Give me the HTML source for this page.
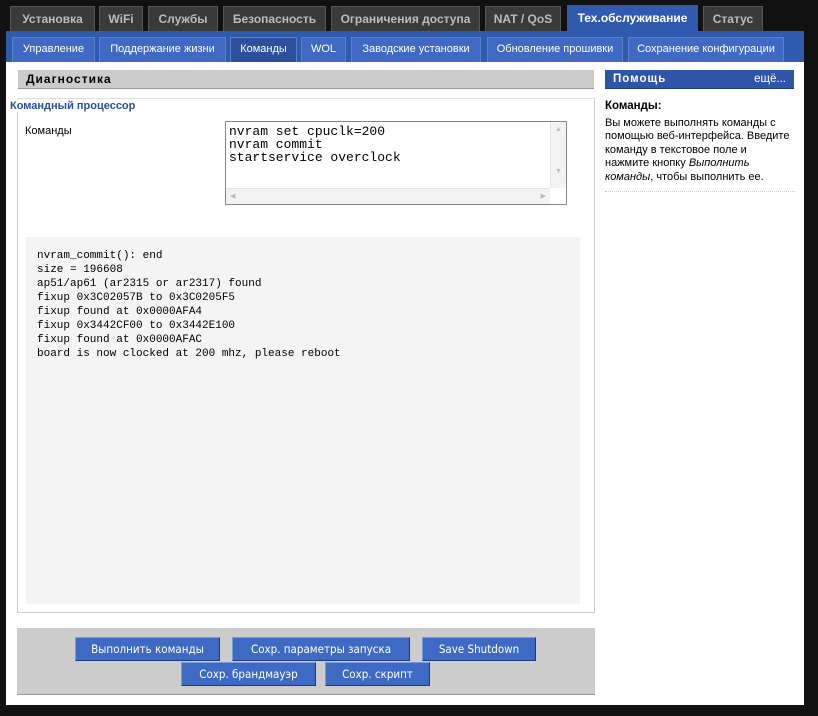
<!DOCTYPE html>
<html><head><meta charset="utf-8"><style>
*{margin:0;padding:0;box-sizing:border-box}
body{width:818px;height:716px;background:#111;position:relative;overflow:hidden;font-family:"Liberation Sans","DejaVu Sans",sans-serif;font-size:11px;color:#000}
.a{position:absolute}
.t{position:absolute;top:6px;height:25px;background:#3a3a3a;border:1px solid #555;border-bottom:none;color:#bbb;font-weight:bold;font-size:12px;text-align:center;line-height:24px}
.t.on{background:#2f5aae;color:#fff;top:5px;height:26px;border-color:#2f5aae}
.s{position:absolute;top:37px;height:25px;background:#3f69c2;border:1px solid #5a80cc;border-bottom:none;color:#fff;font-size:11px;text-align:center;line-height:23px}
.s.on{background:#2c509e}
.b{position:absolute;height:24px;background:#3e6ac4;color:#fff;font-family:"DejaVu Sans Condensed","Liberation Sans Narrow",sans-serif;font-size:11.5px;text-align:center;line-height:22px;border:1px solid;border-color:#7a9ae0 #1f3a78 #1f3a78 #7a9ae0}
pre{font-family:"Liberation Mono","Courier New",monospace}
</style></head><body>
<div class="t" style="left:10px;width:85px">Установка</div>
<div class="t" style="left:99px;width:44px">WiFi</div>
<div class="t" style="left:148px;width:70px">Службы</div>
<div class="t" style="left:223px;width:103px">Безопасность</div>
<div class="t" style="left:331px;width:149px">Ограничения доступа</div>
<div class="t" style="left:485px;width:76px">NAT / QoS</div>
<div class="t on" style="left:567px;width:131px">Тех.обслуживание</div>
<div class="t" style="left:703px;width:60px">Статус</div>
<div class="a" style="left:6px;top:31px;width:798px;height:31px;background:#2f5aae"></div>
<div class="s" style="left:12px;width:83px">Управление</div>
<div class="s" style="left:99px;width:127px">Поддержание жизни</div>
<div class="s on" style="left:230px;width:67px">Команды</div>
<div class="s" style="left:301px;width:45px">WOL</div>
<div class="s" style="left:351px;width:130px">Заводские установки</div>
<div class="s" style="left:487px;width:136px">Обновление прошивки</div>
<div class="s" style="left:628px;width:156px">Сохранение конфигурации</div>
<div class="a" style="left:6px;top:62px;width:798px;height:643px;background:#fff"></div>
<div class="a" style="left:18px;top:70px;width:576px;height:19px;background:#ccc;border-bottom:1px solid #999;font-weight:bold;font-size:12px;letter-spacing:1px;padding-left:8px;line-height:19px">Диагностика</div>
<div class="a" style="left:17px;top:98px;width:578px;height:515px;border:1px solid #ccc;border-top:1px solid #ddd"></div>
<div class="a" style="left:10px;top:100px;color:#2a4f96;font-weight:bold;font-size:11px;background:#fff;padding-right:2px">Командный процессор</div>
<div class="a" style="left:25px;top:125px">Команды</div>
<div class="a" style="left:225px;top:121px;width:342px;height:84px;border:1px solid #888;background:#fff">
<pre style="position:absolute;left:3px;top:3px;font-size:13px;line-height:13px">nvram set cpuclk=200
nvram commit
startservice overclock</pre>
<div class="a" style="right:0;top:0;width:16px;height:66px;background:#f3f3f3;border-left:1px solid #e4e4e4;color:#bbb;font-size:7px;text-align:center;padding-top:4px">▲<br><br><br><br><br><br>▼</div>
<div class="a" style="left:0;bottom:0;width:324px;height:16px;background:#f3f3f3;border-top:1px solid #e4e4e4;color:#bbb;font-size:7px;line-height:16px;padding:0 4px">◀<span style="float:right">▶</span></div>
</div>
<div class="a" style="left:26px;top:237px;width:554px;height:367px;background:#f4f4f4">
<pre style="position:absolute;left:11px;top:12px;font-size:11px;line-height:14px">nvram_commit(): end
size = 196608
ap51/ap61 (ar2315 or ar2317) found
fixup 0x3C02057B to 0x3C0205F5
fixup found at 0x0000AFA4
fixup 0x3442CF00 to 0x3442E100
fixup found at 0x0000AFAC
board is now clocked at 200 mhz, please reboot</pre></div>
<div class="a" style="left:17px;top:628px;width:578px;height:67px;background:#ccc;border-bottom:1px solid #999"></div>
<div class="b" style="left:75px;top:637px;width:145px">Выполнить команды</div>
<div class="b" style="left:232px;top:637px;width:178px">Сохр. параметры запуска</div>
<div class="b" style="left:422px;top:637px;width:114px">Save Shutdown</div>
<div class="b" style="left:181px;top:662px;width:135px">Сохр. брандмауэр</div>
<div class="b" style="left:325px;top:662px;width:105px">Сохр. скрипт</div>
<div class="a" style="left:605px;top:70px;width:189px;height:19px;background:#2f55a8;border-bottom:1px solid #1e3d80;color:#fff;line-height:19px;padding:0 8px;font-size:11.5px"><b style="letter-spacing:1px">Помощь</b><span style="float:right">ещё...</span></div>
<div class="a" style="left:605px;top:100px;width:195px;font-size:11px;line-height:13.5px;white-space:nowrap"><b style="font-size:11.5px">Команды:</b><div style="margin-top:3px">Вы можете выполнять команды с<br>помощью веб-интерфейса. Введите<br>команду в текстовое поле и<br>нажмите кнопку <i>Выполнить</i><br><i>команды</i>, чтобы выполнить ее.</div></div>
<div class="a" style="left:605px;top:191px;width:190px;border-top:1px dotted #ccc"></div>
</body></html>
